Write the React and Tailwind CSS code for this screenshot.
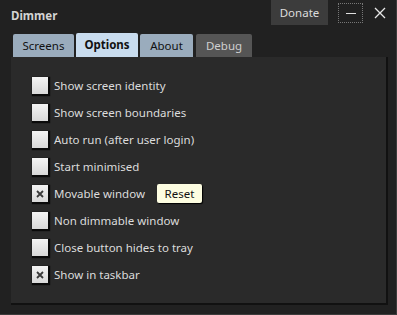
import React from "react";

const rows = [
  { label: "Show screen identity", checked: false },
  { label: "Show screen boundaries", checked: false },
  { label: "Auto run (after user login)", checked: false },
  { label: "Start minimised", checked: false },
  { label: "Movable window", checked: true, reset: true },
  { label: "Non dimmable window", checked: false },
  { label: "Close button hides to tray", checked: false },
  { label: "Show in taskbar", checked: true },
];

function Check({ checked }) {
  return (
    <div className="w-[16px] h-[17px] shrink-0 bg-gradient-to-b from-[#f4f4f4] to-[#d8d8d8] shadow-[1px_1px_1px_1px_#0a0a0a] flex items-center justify-center">
      {checked && (
        <svg width="8" height="8" viewBox="0 0 8 8">
          <path d="M1 1 L7 7 M7 1 L1 7" stroke="#3a3a3a" strokeWidth="1.8" />
        </svg>
      )}
    </div>
  );
}

export default function App() {
  return (
    <div
      className="w-[397px] h-[315px] bg-[#212121] border-r border-b border-[#3c3c3c] flex flex-col text-[#dcdcdc]"
      style={{ fontFamily: '"Noto Sans", "Open Sans", sans-serif' }}
    >
      <div className="h-[25px] flex items-start">
        <div className="pl-[11px] pt-[10px] text-[11.5px] font-bold leading-none text-[#d4d4d4]">Dimmer</div>
        <div className="ml-auto w-[57px] h-[25px] bg-[#3c3c3c] flex items-center justify-center text-[11.5px] text-[#dcdcdc]">
          Donate
        </div>
        <div className="ml-[10px] mt-[3px] w-[25px] h-[20px] border border-dotted border-[#777] flex items-center justify-center">
          <div className="w-[10px] h-[1px] bg-[#e0e0e0]" />
        </div>
        <div className="w-[33px] h-[25px] flex items-center justify-center">
          <svg width="12" height="12" viewBox="0 0 12 12">
            <path d="M1 1 L11 11 M11 1 L1 11" stroke="#e8e8e8" strokeWidth="1.3" />
          </svg>
        </div>
      </div>
      <div className="h-[8px]" />
      <div className="flex items-end pl-[13px] gap-[2px] h-[24px] text-[11.5px]">
        <div className="w-[61px] h-[23px] bg-[#9aacbd] rounded-t-[2px] text-[#111] flex items-center justify-center">Screens</div>
        <div className="w-[62px] h-[24px] bg-[#c9dcee] rounded-t-[2px] text-[#111] font-bold flex items-center justify-center">Options</div>
        <div className="w-[53px] h-[23px] bg-[#9aacbd] rounded-t-[2px] text-[#111] flex items-center justify-center">About</div>
        <div className="w-[56px] h-[23px] ml-[1px] bg-[#555555] rounded-t-[2px] text-[#cfcfcf] flex items-center justify-center">Debug</div>
      </div>
      <div className="ml-[11px] w-[375px] h-[246px] bg-[#2a2a2a] shadow-[1px_1px_0_1px_#111] pt-[20px] pl-[21px] flex flex-col gap-[10px]">
        {rows.map((r) => (
          <div key={r.label} className="flex items-center h-[17px]">
            <Check checked={r.checked} />
            <span className="ml-[6px] text-[11.5px] text-[#dcdcdc] whitespace-nowrap">{r.label}</span>
            {r.reset && (
              <div className="ml-[12px] h-[19px] w-[45px] shrink-0 bg-[#fdfde1] rounded-[2px] text-[#111] text-[11.5px] flex items-center justify-center shadow-[1px_1px_1px_#000]">
                Reset
              </div>
            )}
          </div>
        ))}
      </div>
    </div>
  );
}
